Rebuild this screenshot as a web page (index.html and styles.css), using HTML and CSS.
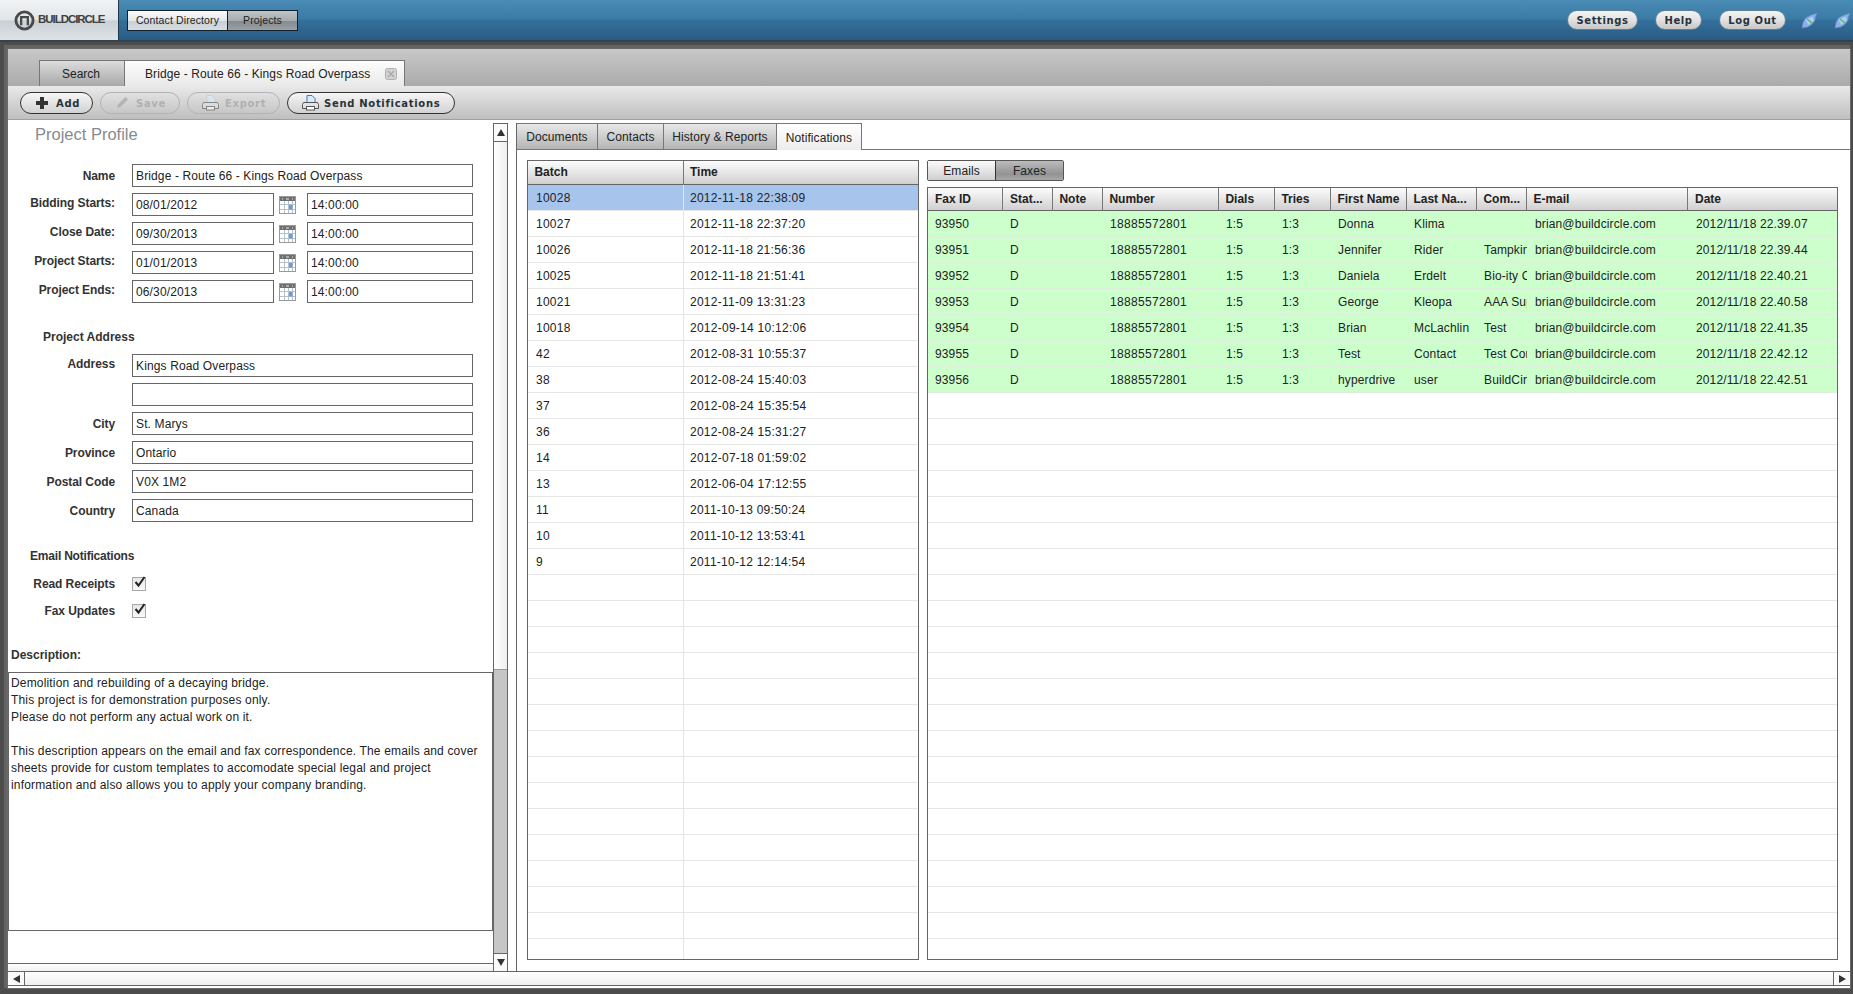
FILE: index.html
```html
<!DOCTYPE html>
<html lang="en">
<head>
<meta charset="utf-8">
<title>BuildCircle - Projects</title>
<link rel="stylesheet" href="styles.css">
</head>
<body>
<svg class="sprites" width="0" height="0" aria-hidden="true">
  <defs>
    <symbol id="plug" viewBox="0 0 16 16">
      <path d="M1 15 L2 9.5 L4.5 5.5 L9 3 L11 2.5 L15 1 L13.5 5 L13 8 L10.5 11.5 L6.5 14 Z" fill="#8eb0e8" stroke="#6288d0" stroke-width=".8"/>
      <path d="M4 7 L11 4.5 L12 8 L7 12 Z" fill="#b4cdf2"/>
      <path d="M5.5 6.5 L10.5 10.5" stroke="#58c060" stroke-width="1.5" fill="none"/>
    </symbol>
    <symbol id="cal" viewBox="0 0 17 18">
      <rect x=".5" y=".5" width="16" height="17" fill="#fff" stroke="#9a9a9a"/>
      <rect x="1" y="1" width="15" height="4" fill="#6f6f6f"/>
      <path d="M3 3h1M7 3h3M13 3h1" stroke="#e8e8e8"/>
      <path d="M1 8.5h15M1 13.5h15M5.5 5v12M9.5 5v12M13.5 5v12" stroke="#b4c0cc" fill="none"/>
      <rect x="10" y="9" width="3.5" height="4.5" fill="#6d9bd6"/>
    </symbol>
    <symbol id="printer" viewBox="0 0 17 17">
      <path d="M5 1.5h5l3 3v5H5z" fill="#dfeaf8" stroke="currentColor"/>
      <path d="M1.5 8.5h14l1 2v4h-16v-4z" fill="#e4e4e4" stroke="#555"/>
      <rect x="4.5" y="12.5" width="8" height="3.5" fill="#fff" stroke="#555"/>
    </symbol>
    <symbol id="check" viewBox="0 0 13 13">
      <path d="M2.5 6 L5.5 9.5 L11.5 1" stroke="#222" stroke-width="2" fill="none"/>
    </symbol>
  </defs>
</svg>

<header class="topbar">
  <div class="logo">
    <svg class="logo-mark" viewBox="0 0 22 22" aria-hidden="true">
      <circle cx="11" cy="11" r="9" fill="none" stroke="#4a4a4a" stroke-width="3"/>
      <path d="M7.5 16V7.5h7V16" fill="none" stroke="#4a4a4a" stroke-width="2.4"/>
    </svg>
    <span class="logo-text">BUILDCIRCLE</span>
  </div>
  <nav class="nav">
    <a class="nav-item nav-contacts">Contact Directory</a>
    <a class="nav-item nav-projects is-current">Projects</a>
  </nav>
  <div class="top-actions">
    <a class="pill pill-settings">Settings</a>
    <a class="pill pill-help">Help</a>
    <a class="pill pill-logout">Log Out</a>
    <svg class="plug plug-first" aria-hidden="true"><use href="#plug"/></svg>
    <svg class="plug" aria-hidden="true"><use href="#plug"/></svg>
  </div>
</header>

<main class="window">
  <div class="doc-tabs">
    <a class="doc-tab doc-tab-search">Search</a>
    <a class="doc-tab doc-tab-project is-active">
      <span>Bridge - Route 66 - Kings Road Overpass</span>
      <svg class="tab-close" viewBox="0 0 12 12" aria-hidden="true">
        <rect x=".5" y=".5" width="11" height="11" rx="2" fill="#d2d2d2" stroke="#b0b0b0"/>
        <path d="M3 3l6 6M9 3l-6 6" stroke="#a8a8a8" stroke-width="1.3"/>
      </svg>
    </a>
  </div>

  <div class="toolbar">
    <button class="tool tool-add">
      <svg class="tool-icon-add" viewBox="0 0 12 12" aria-hidden="true"><path d="M4 0h4v4h4v4H8v4H4V8H0V4h4z" fill="#333"/></svg>
      <span>Add</span>
    </button>
    <button class="tool tool-save is-disabled">
      <svg class="tool-icon-save" viewBox="0 0 13 13" aria-hidden="true"><path d="M1 12l1-3.5L9.5 1 12 3.5 4.5 11z" fill="#b4b4b4"/></svg>
      <span>Save</span>
    </button>
    <button class="tool tool-export is-disabled">
      <svg class="tool-icon-print" aria-hidden="true"><use href="#printer"/></svg>
      <span>Export</span>
    </button>
    <button class="tool tool-send">
      <svg class="tool-icon-print" aria-hidden="true"><use href="#printer"/></svg>
      <span>Send Notifications</span>
    </button>
  </div>

  <div class="content">
    <section class="profile">
      <h1 class="profile-title">Project Profile</h1>

      <div class="form-group">
        <div class="form-row"><label class="label">Name</label><div class="field field-wide">Bridge - Route 66 - Kings Road Overpass</div></div>
        <div class="form-row"><label class="label label-date">Bidding Starts:</label><div class="field field-date">08/01/2012</div><svg class="cal" aria-hidden="true"><use href="#cal"/></svg><div class="field field-time">14:00:00</div></div>
        <div class="form-row"><label class="label label-date">Close Date:</label><div class="field field-date">09/30/2013</div><svg class="cal" aria-hidden="true"><use href="#cal"/></svg><div class="field field-time">14:00:00</div></div>
        <div class="form-row"><label class="label label-date">Project Starts:</label><div class="field field-date">01/01/2013</div><svg class="cal" aria-hidden="true"><use href="#cal"/></svg><div class="field field-time">14:00:00</div></div>
        <div class="form-row"><label class="label label-date">Project Ends:</label><div class="field field-date">06/30/2013</div><svg class="cal" aria-hidden="true"><use href="#cal"/></svg><div class="field field-time">14:00:00</div></div>
      </div>

      <h2 class="section-title section-address">Project Address</h2>
      <div class="form-group">
        <div class="form-row"><label class="label label-high">Address</label><div class="field field-wide">Kings Road Overpass</div></div>
        <div class="form-row"><label class="label"></label><div class="field field-wide"></div></div>
        <div class="form-row"><label class="label">City</label><div class="field field-wide">St. Marys</div></div>
        <div class="form-row"><label class="label">Province</label><div class="field field-wide">Ontario</div></div>
        <div class="form-row"><label class="label">Postal Code</label><div class="field field-wide">V0X 1M2</div></div>
        <div class="form-row"><label class="label">Country</label><div class="field field-wide">Canada</div></div>
      </div>

      <h2 class="section-title section-email">Email Notifications</h2>
      <div class="check-row"><label class="label">Read Receipts</label><span class="checkbox"><svg viewBox="0 0 13 13" aria-hidden="true"><use href="#check"/></svg></span></div>
      <div class="check-row"><label class="label">Fax Updates</label><span class="checkbox"><svg viewBox="0 0 13 13" aria-hidden="true"><use href="#check"/></svg></span></div>

      <h2 class="section-title section-desc">Description:</h2>
      <div class="description">
        Demolition and rebuilding of a decaying bridge.<br>
        This project is for demonstration purposes only.<br>
        Please do not perform any actual work on it.<br>
        <br>
        This description appears on the email and fax correspondence. The emails and cover<br>
        sheets provide for custom templates to accomodate special legal and project<br>
        information and also allows you to apply your company branding.
      </div>
      <div class="profile-hscroll"></div>
    </section>

    <div class="vscroll">
      <div class="scroll-btn"><span class="tri tri-up"></span></div>
      <div class="vscroll-track"></div>
      <div class="vscroll-thumb"></div>
      <div class="scroll-btn scroll-btn-down"><span class="tri tri-down"></span></div>
    </div>

    <section class="detail">
      <div class="detail-tabs">
        <a class="detail-tab detail-tab-docs">Documents</a>
        <a class="detail-tab detail-tab-contacts">Contacts</a>
        <a class="detail-tab detail-tab-history">History &amp; Reports</a>
        <a class="detail-tab detail-tab-notif is-active">Notifications</a>
      </div>
      <div class="detail-body">
        <div class="grid-wrap grid-batch">
          <table class="grid">
            <colgroup><col class="c-batch"><col></colgroup>
            <thead><tr><th>Batch</th><th>Time</th></tr></thead>
            <tbody>
              <tr class="is-selected"><td>10028</td><td>2012-11-18 22:38:09</td></tr>
              <tr><td>10027</td><td>2012-11-18 22:37:20</td></tr>
              <tr><td>10026</td><td>2012-11-18 21:56:36</td></tr>
              <tr><td>10025</td><td>2012-11-18 21:51:41</td></tr>
              <tr><td>10021</td><td>2012-11-09 13:31:23</td></tr>
              <tr><td>10018</td><td>2012-09-14 10:12:06</td></tr>
              <tr><td>42</td><td>2012-08-31 10:55:37</td></tr>
              <tr><td>38</td><td>2012-08-24 15:40:03</td></tr>
              <tr><td>37</td><td>2012-08-24 15:35:54</td></tr>
              <tr><td>36</td><td>2012-08-24 15:31:27</td></tr>
              <tr><td>14</td><td>2012-07-18 01:59:02</td></tr>
              <tr><td>13</td><td>2012-06-04 17:12:55</td></tr>
              <tr><td>11</td><td>2011-10-13 09:50:24</td></tr>
              <tr><td>10</td><td>2011-10-12 13:53:41</td></tr>
              <tr><td>9</td><td>2011-10-12 12:14:54</td></tr>
            </tbody>
          </table>
        </div>

        <div class="fax-column">
          <div class="segment">
            <a class="seg seg-emails">Emails</a>
            <a class="seg seg-faxes is-current">Faxes</a>
          </div>
          <div class="grid-wrap grid-fax">
            <table class="grid">
              <colgroup>
                <col class="f-id"><col class="f-stat"><col class="f-note"><col class="f-num"><col class="f-dials"><col class="f-tries"><col class="f-first"><col class="f-last"><col class="f-com"><col class="f-mail"><col>
              </colgroup>
              <thead><tr><th>Fax ID</th><th>Stat...</th><th>Note</th><th>Number</th><th>Dials</th><th>Tries</th><th>First Name</th><th>Last Na...</th><th>Com...</th><th>E-mail</th><th>Date</th></tr></thead>
              <tbody>
                <tr><td>93950</td><td>D</td><td></td><td class="num">18885572801</td><td>1:5</td><td>1:3</td><td>Donna</td><td>Klima</td><td></td><td>brian@buildcircle.com</td><td>2012/11/18 22.39.07</td></tr>
                <tr><td>93951</td><td>D</td><td></td><td class="num">18885572801</td><td>1:5</td><td>1:3</td><td>Jennifer</td><td>Rider</td><td>Tampkins</td><td>brian@buildcircle.com</td><td>2012/11/18 22.39.44</td></tr>
                <tr><td>93952</td><td>D</td><td></td><td class="num">18885572801</td><td>1:5</td><td>1:3</td><td>Daniela</td><td>Erdelt</td><td>Bio-ity Corp</td><td>brian@buildcircle.com</td><td>2012/11/18 22.40.21</td></tr>
                <tr><td>93953</td><td>D</td><td></td><td class="num">18885572801</td><td>1:5</td><td>1:3</td><td>George</td><td>Kleopa</td><td>AAA Supply</td><td>brian@buildcircle.com</td><td>2012/11/18 22.40.58</td></tr>
                <tr><td>93954</td><td>D</td><td></td><td class="num">18885572801</td><td>1:5</td><td>1:3</td><td>Brian</td><td>McLachlin</td><td>Test</td><td>brian@buildcircle.com</td><td>2012/11/18 22.41.35</td></tr>
                <tr><td>93955</td><td>D</td><td></td><td class="num">18885572801</td><td>1:5</td><td>1:3</td><td>Test</td><td>Contact</td><td>Test Company</td><td>brian@buildcircle.com</td><td>2012/11/18 22.42.12</td></tr>
                <tr><td>93956</td><td>D</td><td></td><td class="num">18885572801</td><td>1:5</td><td>1:3</td><td>hyperdrive</td><td>user</td><td>BuildCircle</td><td>brian@buildcircle.com</td><td>2012/11/18 22.42.51</td></tr>
              </tbody>
            </table>
          </div>
        </div>
      </div>
    </section>
  </div>

  <div class="hscroll">
    <div class="scroll-btn scroll-btn-left"><span class="tri tri-left"></span></div>
    <div class="hscroll-track"></div>
    <div class="scroll-btn scroll-btn-right"><span class="tri tri-right"></span></div>
  </div>
</main>
</body>
</html>
```

FILE: styles.css
```css
* { box-sizing: border-box; }

html, body { height: 100%; }

body {
  margin: 0;
  height: 994px;
  overflow: hidden;
  background: #4c4c4c;
  color: #222;
  font: 12px/1.2 "Liberation Sans", Arial, sans-serif;
}

.sprites { position: absolute; }

/* top bar */
.topbar {
  display: flex;
  align-items: center;
  height: 42px;
  background: linear-gradient(#4a8bb5 0, #3a7ba6 48%, #33709b 50%, #2a5c85 100%);
  border-bottom: 2px solid #34424c;
}

.logo {
  display: flex;
  align-items: center;
  gap: 3px;
  width: 119px;
  height: 40px;
  padding-left: 14px;
  background: linear-gradient(#f1f3f4 0, #e2e6e9 50%, #c8d0d6 52%, #dfe3e6 100%);
  border-right: 1px solid #22394a;
}

.logo-mark { width: 21px; height: 21px; }

.logo-text {
  color: #404040;
  font-size: 11.5px;
  font-weight: bold;
  letter-spacing: -1.05px;
}

.nav {
  display: flex;
  height: 21px;
  margin-left: 8px;
  border: 1px solid #10202c;
}

.nav-item {
  display: flex;
  align-items: center;
  justify-content: center;
  font-size: 10.5px;
  letter-spacing: .12px;
  color: #222;
}

.nav-contacts {
  width: 100px;
  background: linear-gradient(#fbfcfc 0, #e4e8ea 50%, #c8d0d5 52%, #d8dde0 100%);
  border-right: 1px solid #10202c;
}

.nav-projects {
  width: 69px;
  background: linear-gradient(#c0c4c6 0, #a6acaf 50%, #838b90 52%, #9aa0a4 100%);
}

.top-actions {
  display: flex;
  align-items: center;
  margin-left: auto;
  padding-right: 2px;
}

.pill {
  display: flex;
  align-items: center;
  justify-content: center;
  height: 20px;
  padding-top: 1px;
  border-radius: 10px;
  background: linear-gradient(#f4f4f4 0, #e2e2e2 50%, #c6c6c6 100%);
  border: 1px solid #5d7f9a;
  color: #28323a;
  font-family: "DejaVu Sans", Verdana, sans-serif;
  font-size: 10px;
  font-weight: bold;
  letter-spacing: .6px;
}

.pill-settings { width: 71px; }
.pill-help { width: 47px; margin-left: 17px; }
.pill-logout { width: 67px; margin-left: 17px; }

.plug { width: 17px; height: 17px; margin-left: 16px; }
.plug-first { margin-left: 15px; }

/* window */
.window {
  display: flex;
  flex-direction: column;
  width: 1842px;
  height: 939px;
  margin: 7px 0 0 8px;
  background: #fff;
  box-shadow: 0 0 0 1px #6a6a6a, -2px -2px 0 2px #636363;
}

.doc-tabs {
  display: flex;
  align-items: flex-end;
  height: 37px;
  padding-left: 31px;
  background: linear-gradient(#c8c8c8, #ababab);
}

.doc-tab {
  display: flex;
  align-items: center;
  height: 26px;
  padding-top: 1px;
  border: 1px solid #777;
  border-bottom: 0;
}

.doc-tab-search {
  justify-content: center;
  width: 85px;
  padding-right: 2px;
  background: linear-gradient(#dcdcdc, #a8a8a8);
  border-right: 0;
}

.doc-tab-project {
  width: 281px;
  padding-left: 20px;
  background: linear-gradient(#fdfdfd, #e9e9e9);
  letter-spacing: .1px;
}

.doc-tab-project span { padding-top: 1px; }

.tab-close { width: 12px; height: 12px; margin-left: 15px; }

.toolbar {
  display: flex;
  align-items: center;
  gap: 7px;
  height: 34px;
  padding-left: 12px;
  background: linear-gradient(#e9e9e9, #bfbfbf);
  border-bottom: 1px solid #a0a0a0;
}

.tool {
  display: flex;
  align-items: center;
  gap: 7px;
  height: 22px;
  padding: 0 14px;
  border: 1px solid #333;
  border-radius: 11px;
  background: linear-gradient(#f6f6f6, #d2d2d2);
  color: #28323a;
  font-family: "DejaVu Sans", Verdana, sans-serif;
  font-size: 10px;
  font-weight: bold;
  letter-spacing: .7px;
  white-space: nowrap;
}

.tool span { padding-top: 1px; }

.is-disabled {
  border-color: #b4b4b4;
  background: transparent;
  color: #b0b0b0;
}

.tool-add { width: 73px; gap: 8px; padding-left: 15px; }
.tool-save { width: 80px; padding-left: 15px; }
.tool-export { width: 93px; gap: 6px; }
.tool-send { width: 168px; gap: 5px; padding-right: 0; color: #28323a; }

.tool-icon-add { flex: none; width: 12px; height: 12px; }
.tool-icon-save { flex: none; width: 13px; height: 13px; }
.tool-icon-print { flex: none; width: 17px; height: 17px; color: #3c78c8; }
.is-disabled .tool-icon-print { color: #b8c8dc; opacity: .6; }

.content {
  flex: 1;
  display: flex;
  min-height: 0;
}

/* left profile */
.profile {
  display: flex;
  flex-direction: column;
  width: 485px;
}

.profile-title {
  height: 44px;
  margin: 0;
  padding: 5px 0 0 27px;
  color: #858b90;
  font-size: 16.5px;
  font-weight: normal;
}

.form-group {
  display: flex;
  flex-direction: column;
  gap: 6px;
}

.form-row {
  display: flex;
  align-items: center;
  height: 23px;
}

.label {
  flex: none;
  width: 107px;
  margin-right: 17px;
  padding-top: 1px;
  text-align: right;
  color: #333;
  font-weight: bold;
  letter-spacing: -.08px;
}

.label-date { padding-top: 0; padding-bottom: 3px; }
.label-high { padding-top: 0; padding-bottom: 2px; }

.field {
  flex: none;
  height: 23px;
  padding: 0 3px;
  border: 1px solid #666;
  background: #fff;
  line-height: 22px;
  white-space: nowrap;
  letter-spacing: .13px;
}

.field-wide { width: 341px; }
.field-date { width: 142px; }
.field-time { width: 166px; margin-left: 11px; }

.cal { flex: none; width: 17px; height: 18px; margin-left: 5px; }

.section-title {
  margin: 0;
  color: #333;
  font-size: 12px;
  font-weight: bold;
}

.section-address { height: 51px; padding: 27px 0 0 35px; }
.section-email { height: 48px; padding: 27px 0 0 22px; letter-spacing: -.2px; }
.section-desc { height: 48px; padding: 24px 0 0 3px; flex: none; }

.check-row {
  display: flex;
  align-items: center;
  height: 27px;
}

.checkbox {
  display: block;
  width: 14px;
  height: 14px;
  padding: 0;
  border: 1px solid #a8a8a8;
  background: linear-gradient(#e6e6e6, #fafafa);
}

.checkbox svg { display: block; width: 13px; height: 13px; margin: -2px 0 0 0; }

.description {
  height: 259px;
  padding: 2px 2px;
  border: 1px solid #666;
  line-height: 17px;
  white-space: nowrap;
  letter-spacing: .17px;
}

.profile-hscroll {
  height: 8px;
  margin-top: auto;
  border-top: 1px solid #666;
  background: linear-gradient(#fff, #f0f0f0);
}

/* scrollbars */
.vscroll {
  display: flex;
  flex-direction: column;
  flex: none;
  width: 15px;
  margin-top: 3px;
  border: 1px solid #666;
  border-bottom: 0;
}

.scroll-btn {
  display: flex;
  align-items: center;
  justify-content: center;
  flex: none;
  height: 18px;
  background: #fafafa;
}

.scroll-btn-down { border-top: 1px solid #666; }

.vscroll .scroll-btn:first-child { border-bottom: 1px solid #666; }

.vscroll-track {
  height: 528px;
  background: linear-gradient(90deg, #fff, #eee);
  border-bottom: 1px solid #999;
}

.vscroll-thumb { flex: 1; background: #c6c6c6; }

.tri { width: 0; height: 0; border: solid transparent; }
.tri-up { border-width: 0 4px 7px; border-bottom-color: #333; }
.tri-down { border-width: 7px 4px 0; border-top-color: #333; }
.tri-left { border-width: 4px 7px 4px 0; border-right-color: #333; }
.tri-right { border-width: 4px 0 4px 7px; border-left-color: #333; }

.hscroll {
  display: flex;
  flex: none;
  height: 15px;
  border-top: 1px solid #666;
  border-bottom: 1px solid #666;
  margin-bottom: 2px;
}

.hscroll .scroll-btn { height: 13px; width: 17px; }
.scroll-btn-left { border-right: 1px solid #666; }
.scroll-btn-right { border-left: 1px solid #666; }

.hscroll-track {
  flex: 1;
  background: linear-gradient(#fff, #efefef);
}

/* right detail */
.detail {
  display: flex;
  flex: none;
  flex-direction: column;
  width: 1334px;
  margin-left: 8px;
  margin-top: 3px;
  border-left: 1px solid #666;
}

.detail-tabs {
  display: flex;
  height: 27px;
  border-bottom: 1px solid #777;
  flex: none;
}

.detail-tab {
  display: flex;
  align-items: center;
  justify-content: center;
  height: 26px;
  padding-top: 1px;
  border: 1px solid #777;
  border-left: 0;
  border-bottom: 0;
  background: linear-gradient(#e8e8e8, #b4b4b4);
  letter-spacing: .08px;
}

.detail-tab-docs { width: 81px; }
.detail-tab-contacts { width: 66px; }
.detail-tab-history { width: 113px; }
.detail-tab-notif { width: 85px; height: 27px; padding-top: 2px; background: linear-gradient(#fff, #ececec); position: relative; z-index: 1; }

.detail-body {
  flex: 1;
  display: flex;
  gap: 8px;
  min-height: 0;
  padding: 10px 12px 11px 10px;
}

.grid-wrap {
  border: 1px solid #666;
  overflow: hidden;
  background-color: #fff;
}

.grid-batch {
  flex: none;
  width: 392px;
  background-image:
    linear-gradient(#e6e6e6, #e6e6e6),
    linear-gradient(to bottom, transparent 25px, #e6e6e6 25px);
  background-size: 1px 100%, 100% 26px;
  background-position: 155px 0, 0 24px;
  background-repeat: no-repeat, repeat-y;
}

.grid-fax {
  flex: 1;
  min-height: 0;
  background-image: linear-gradient(to bottom, transparent 25px, #e6e6e6 25px);
  background-size: 100% 26px;
  background-position: 0 23px;
  background-repeat: repeat-y;
}

.grid {
  width: 100%;
  table-layout: fixed;
  border-collapse: separate;
  border-spacing: 0;
}

.grid th {
  height: 23px;
  padding: 0 0 0 6.4px;
  overflow: hidden;
  background: linear-gradient(#fcfcfc, #d0d0d0);
  border-bottom: 1px solid #666;
  border-right: 1px solid #777;
  text-align: left;
  font-weight: bold;
  color: #222;
  white-space: nowrap;
}

.grid th:last-child { border-right: 0; }

.grid td {
  height: 26px;
  padding: 2px 4px 0 7px;
  overflow: hidden;
  white-space: nowrap;
  border-bottom: 1px solid #e6e6e6;
  letter-spacing: .13px;
}

.grid-batch th { height: 24px; }
.grid-batch th:last-child { padding-left: 6px; }
.grid-batch td { letter-spacing: .26px; }
.grid-batch td:first-child { padding-left: 8px; border-right: 1px solid #e6e6e6; }
.grid-batch td:last-child { padding-left: 6px; }

.grid-batch .is-selected td { background: #a7c5ec; }

.grid-fax td { background: #ccffcc; border-bottom-color: #ddeedd; }
.grid-fax td:nth-child(n+10) { padding-left: 8px; }
.grid-fax th:first-child { padding-left: 7px; }
.grid-fax th:nth-child(2) { padding-left: 7px; }
.grid-fax th:last-child { padding-left: 7px; }
.grid-fax .num { letter-spacing: .33px; }

.c-batch { width: 156px; }

.f-id { width: 75px; }
.f-stat { width: 50px; }
.f-note { width: 50px; }
.f-num { width: 116px; }
.f-dials { width: 56px; }
.f-tries { width: 56px; }
.f-first { width: 76px; }
.f-last { width: 70px; }
.f-com { width: 50px; }
.f-mail { width: 161px; }

.fax-column {
  flex: 1;
  display: flex;
  flex-direction: column;
  gap: 6px;
  min-width: 0;
}

.segment {
  display: flex;
  flex: none;
  width: 137px;
  height: 21px;
  border: 1px solid #555;
  border-radius: 2px;
}

.seg {
  display: flex;
  flex: 1;
  align-items: center;
  justify-content: center;
  padding-top: 1px;
  letter-spacing: .08px;
}

.seg-emails {
  background: linear-gradient(#fbfbfb, #cfcfcf);
  border-right: 1px solid #333;
}

.seg-faxes { background: linear-gradient(#bcbcbc, #939393 70%, #a8a8a8); }
```
